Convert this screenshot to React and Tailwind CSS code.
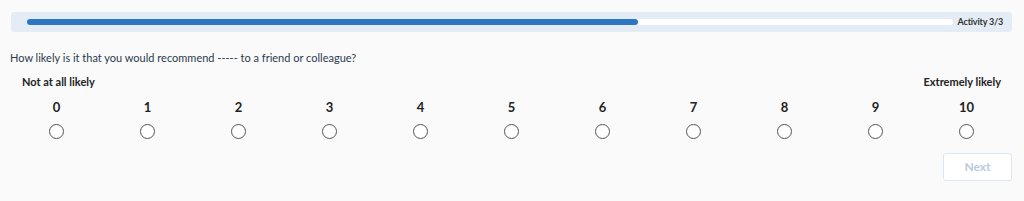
import React from "react";

const SCORES = [0, 1, 2, 3, 4, 5, 6, 7, 8, 9, 10];

export default function App() {
  return (
    <div className="h-[201px] w-[1024px] bg-[#fafafa] font-['Lato',sans-serif] text-[#1f2a37]">
      <div className="pl-[11px] pr-[12px] pt-[12px]">
        {/* progress */}
        <div className="flex h-[20px] items-center rounded-[3px] bg-[#e4edf6] pl-[16px] pr-[9px]">
          <div className="h-[6px] flex-1 rounded-full bg-white">
            <div className="h-full w-[66%] rounded-full bg-[#2b77c1]" />
          </div>
          <div className="ml-[5px] text-[9px] font-bold tracking-[-0.2px] text-[#333]">Activity 3/3</div>
        </div>

        <div className="mt-[18px] -ml-px text-[11px] leading-[16px] text-[#2b3a4d]">
          How likely is it that you would recommend ----- to a friend or colleague?
        </div>

        <div className="mt-[9px] flex justify-between px-[11px] text-[11px] font-bold leading-[14px] text-[#222]">
          <span>Not at all likely</span>
          <span>Extremely likely</span>
        </div>

        <div className="mt-[11px] grid grid-cols-11">
          {SCORES.map((n) => (
            <label key={n} className="flex flex-col items-center">
              <span className="text-[13px] font-bold leading-[14px] text-[#222]">{n}</span>
              <span className="mt-[10px] h-[15px] w-[15px] rounded-full border border-[#555] bg-white" />
            </label>
          ))}
        </div>

        <div className="mt-[14px] flex justify-end">
          <button className="h-[28px] w-[69px] rounded-[3px] border border-[#dce7f1] bg-white text-[12px] font-bold text-[#b8cbdd]">
            Next
          </button>
        </div>
      </div>
    </div>
  );
}
